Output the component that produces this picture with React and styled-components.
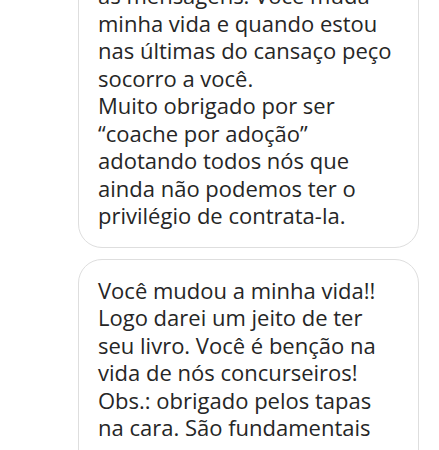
import React from "react";
import styled, { createGlobalStyle } from "styled-components";

const GlobalStyle = createGlobalStyle`
  html, body {
    margin: 0;
    padding: 0;
    background: #ffffff;
    overflow: hidden;
  }
  body {
    font-family: "Open Sans", "Noto Sans", sans-serif;
  }
`;

const Thread = styled.div`
  display: flex;
  flex-direction: column;
  gap: 11px;
  width: 439px;
  height: 450px;
  overflow: hidden;
  padding-left: 78px;
  box-sizing: border-box;
`;

const Bubble = styled.div`
  width: 341px;
  box-sizing: border-box;
  flex-shrink: 0;
  margin-top: ${(p) => (p.$cutTop ? "-36px" : "0")};
  padding: 17px 19px;
  border: 1px solid #dedede;
  border-radius: 24px;
  background: #ffffff;
  color: #262626;
  font-size: 22px;
  line-height: 27.5px;
  white-space: pre-line;
`;

const messages = [
  {
    id: 1,
    cutTop: true,
    text: `as mensagens. Você muda
minha vida e quando estou
nas últimas do cansaço peço
socorro a você.
Muito obrigado por ser
“coache por adoção”
adotando todos nós que
ainda não podemos ter o
privilégio de contrata-la.`,
  },
  {
    id: 2,
    cutTop: false,
    text: `Você mudou a minha vida!!
Logo darei um jeito de ter
seu livro. Você é benção na
vida de nós concurseiros!
Obs.: obrigado pelos tapas
na cara. São fundamentais
para o meu desenvolvimento.`,
  },
];

export default function App() {
  return (
    <>
      <GlobalStyle />
      <Thread>
        {messages.map((m) => (
          <Bubble key={m.id} $cutTop={m.cutTop}>
            {m.text}
          </Bubble>
        ))}
      </Thread>
    </>
  );
}
